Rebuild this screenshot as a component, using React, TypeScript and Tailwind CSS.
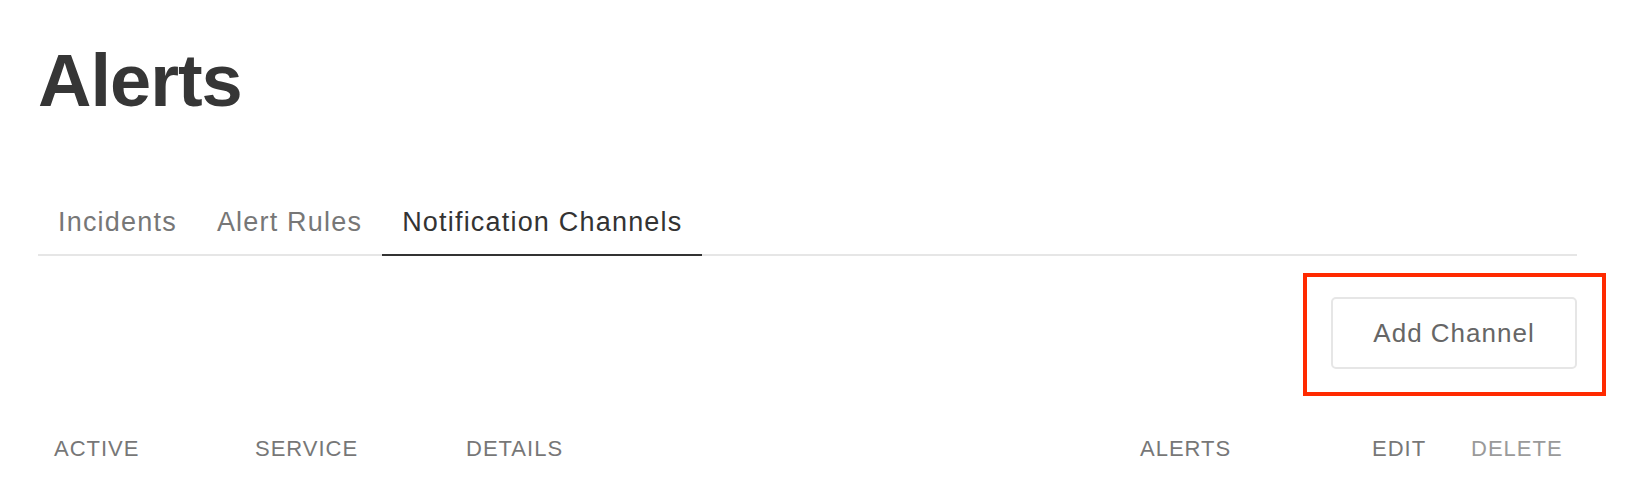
import { useState } from "react";

const TABS = ["Incidents", "Alert Rules", "Notification Channels"];

const COLUMNS = [
  { label: "ACTIVE", w: "w-[201px]", color: "text-[#777777]" },
  { label: "SERVICE", w: "w-[211px]", color: "text-[#777777]" },
  { label: "DETAILS", w: "w-[674px]", color: "text-[#777777]" },
  { label: "ALERTS", w: "w-[232px]", color: "text-[#777777]" },
  { label: "EDIT", w: "w-[99px]", color: "text-[#777777]" },
  { label: "DELETE", w: "w-auto", color: "text-[#9a9a9a]" },
];

export default function App() {
  const [tab, setTab] = useState("Notification Channels");

  return (
    <main className="min-h-screen bg-white font-['Liberation_Sans',Arial,sans-serif]">
      <div className="pl-[38px] pr-[63px] pt-[44px]">
        {/* Page title */}
        <h1 className="text-[74px] font-bold leading-none tracking-[-1px] text-[#363636]">Alerts</h1>

        {/* Tabs */}
        <nav className="mt-[88px] flex border-b-2 border-[#e6e6e6]">
          {TABS.map(t => (
            <button
              key={t}
              onClick={() => setTab(t)}
              className={
                t === tab
                  ? "-mb-[2px] border-b-2 border-[#333333] px-[20px] pb-[16px] text-[27px] leading-[32px] tracking-[1.2px] text-[#333333]"
                  : "-mb-[2px] border-b-2 border-transparent px-[20px] pb-[16px] text-[27px] leading-[32px] tracking-[1.2px] text-[#777777]"
              }
            >
              {t}
            </button>
          ))}
        </nav>

        {/* Actions */}
        <div className="mt-[17px] flex justify-end">
          <div className="-mr-[29px] border-4 border-[#ff2a00] pt-[20px] pb-[23px] pl-[24px] pr-[25px]">
            <button className="flex h-[72px] w-[246px] items-center justify-center rounded-[5px] border-2 border-[#e6e6e6] bg-white text-[26px] tracking-[1px] text-[#666666]">
              Add Channel
            </button>
          </div>
        </div>

        {/* Table header */}
        <div className="mt-[39px] flex pl-[16px] text-[22px] leading-[28px] tracking-[1px]">
          {COLUMNS.map(c => (
            <div key={c.label} className={`${c.w} shrink-0 ${c.color}`}>
              {c.label}
            </div>
          ))}
        </div>
      </div>
    </main>
  );
}
